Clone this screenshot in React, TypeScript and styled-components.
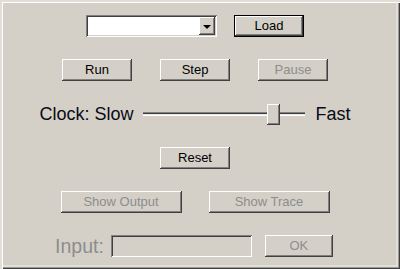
import React from "react";
import styled, { createGlobalStyle, css } from "styled-components";

const GlobalStyle = createGlobalStyle`
  html, body {
    margin: 0;
    padding: 0;
    background: #d4d0c8;
  }
`;

const raised = css`
  box-shadow: inset -1px -1px #404040, inset 1px 1px #ffffff,
    inset -2px -2px #808080, inset 2px 2px #d4d0c8;
`;

const sunken = css`
  box-shadow: inset 1px 1px #808080, inset -1px -1px #ffffff,
    inset 2px 2px #404040, inset -2px -2px #d4d0c8;
`;

const Frame = styled.div`
  width: 400px;
  height: 269px;
  box-sizing: border-box;
  background: #d4d0c8;
  box-shadow: inset 2px 2px #e2dfd8, inset 3px 3px #ffffff,
    inset -1px -1px #404040, inset -2px -2px #9a9893,
    inset -4px -4px #e2dfd8;
  display: flex;
  flex-direction: column;
  align-items: center;
  padding: 15px 10px 0 0;
  font-family: "Liberation Sans", Arial, sans-serif;
`;

const Row = styled.div<{ $gap: number; $top?: number; $nudge?: number }>`
  display: flex;
  align-items: center;
  gap: ${(p) => p.$gap}px;
  margin-top: ${(p) => p.$top ?? 22}px;
  margin-right: ${(p) => p.$nudge ?? 0}px;
  height: 22px;
`;

const Button = styled.button<{ $w: number; $default?: boolean }>`
  width: ${(p) => p.$w}px;
  height: 22px;
  padding: 0 0 1px;
  margin: 0;
  border: none;
  border-radius: 0;
  background: #d4d0c8;
  font-family: "Liberation Sans", Arial, sans-serif;
  font-size: 13px;
  color: #000;
  ${raised}
  ${(p) =>
    p.$default &&
    css`
      box-shadow: inset 0 0 0 1px #000, inset -2px -2px #404040,
        inset 2px 2px #ffffff, inset -3px -3px #808080,
        inset 3px 3px #d4d0c8;
    `}

  &:disabled {
    color: #8d8d8d;
  }
`;

const Combo = styled.div`
  width: 131px;
  height: 22px;
  box-sizing: border-box;
  background: #fff;
  ${sunken}
  display: flex;
  justify-content: flex-end;
  padding: 2px;
`;

const DropButton = styled.div`
  width: 16px;
  height: 18px;
  background: #d4d0c8;
  ${raised}
  display: flex;
  align-items: center;
  justify-content: center;
`;

const Arrow = styled.div`
  width: 0;
  height: 0;
  border-left: 4px solid transparent;
  border-right: 4px solid transparent;
  border-top: 4px solid #000;
  margin-top: 1px;
`;

const BigLabel = styled.span<{ $disabled?: boolean; $size?: number }>`
  font-size: ${(p) => p.$size ?? 18}px;
  line-height: 22px;
  color: ${(p) => (p.$disabled ? "#8d8d8d" : "#0a0a14")};
`;

const Slider = styled.div`
  position: relative;
  width: 162px;
  height: 22px;
`;

const Groove = styled.div`
  position: absolute;
  left: 0;
  right: 0;
  top: 9px;
  height: 4px;
  box-shadow: inset 0 1px #808080, inset 0 2px #404040, inset 0 -1px #ffffff,
    inset 0 -2px #e8e6e0;
`;

const Thumb = styled.div`
  position: absolute;
  top: 1px;
  width: 13px;
  height: 21px;
  background: #d4d0c8;
  ${raised}
`;

const TextBox = styled.div`
  width: 141px;
  height: 22px;
  box-sizing: border-box;
  background: #d4d0c8;
  ${sunken}
`;

const Panel = () => {
  const speed = 0.833;
  return (
    <Frame>
      <Row $gap={17} $top={0}>
        <Combo>
          <DropButton>
            <Arrow />
          </DropButton>
        </Combo>
        <Button $w={70} $default>
          Load
        </Button>
      </Row>
      <Row $gap={28}>
        <Button $w={70}>Run</Button>
        <Button $w={70}>Step</Button>
        <Button $w={70} disabled>
          Pause
        </Button>
      </Row>
      <Row $gap={9}>
        <BigLabel>Clock: Slow</BigLabel>
        <Slider>
          <Groove />
          <Thumb style={{ left: `${Math.round(speed * (162 - 13))}px` }} />
        </Slider>
        <BigLabel style={{ marginLeft: 2 }}>Fast</BigLabel>
      </Row>
      <Row $gap={0}>
        <Button $w={70}>Reset</Button>
      </Row>
      <Row $gap={27}>
        <Button $w={121} disabled>
          Show Output
        </Button>
        <Button $w={121} disabled>
          Show Trace
        </Button>
      </Row>
      <Row $gap={7} $nudge={2}>
        <BigLabel $disabled $size={19.5}>
          Input:
        </BigLabel>
        <TextBox />
        <Button $w={68} disabled style={{ marginLeft: 6 }}>
          OK
        </Button>
      </Row>
    </Frame>
  );
};

const App = () => (
  <>
    <GlobalStyle />
    <Panel />
  </>
);

export default App;
